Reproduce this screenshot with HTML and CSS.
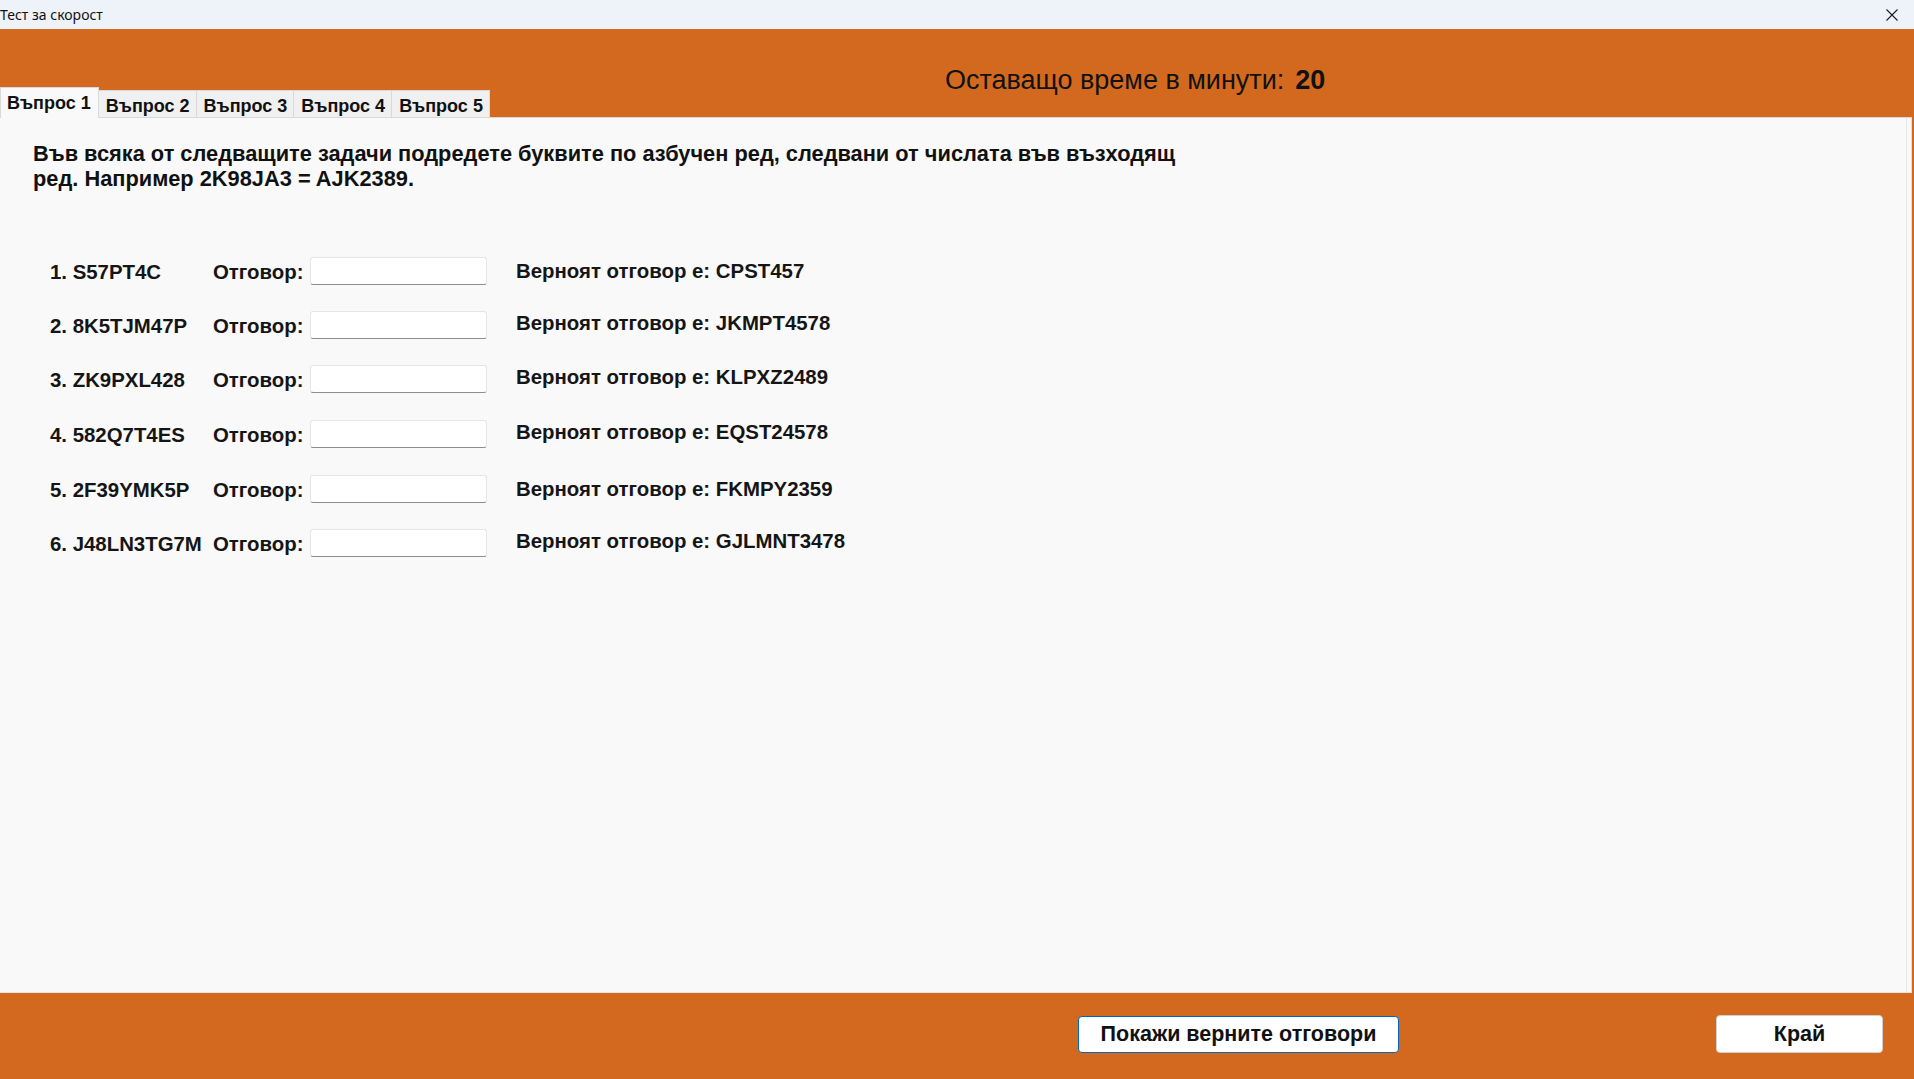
FILE: index.html
```html
<!DOCTYPE html>
<html lang="bg">
<head>
<meta charset="utf-8">
<title>Тест за скорост</title>
<link rel="stylesheet" href="styles.css">
</head>
<body>
<div class="window">
  <div class="titlebar">
    <span class="title">Тест за скорост</span>
    <svg class="close" viewBox="0 0 12 12" width="12" height="12"><path d="M0.5 0.5 L11.5 11.5 M11.5 0.5 L0.5 11.5" stroke="#1b1b1b" stroke-width="1.1" fill="none"/></svg>
  </div>
  <div class="header">
    <div class="tabs">
      <div class="tab active">Въпрос 1</div>
      <div class="tab">Въпрос 2</div>
      <div class="tab">Въпрос 3</div>
      <div class="tab">Въпрос 4</div>
      <div class="tab">Въпрос 5</div>
    </div>
    <div class="timer"><span class="timer-label">Оставащо време в минути:</span><span class="timer-value">20</span></div>
  </div>
  <div class="panel">
    <p class="instructions">Във всяка от следващите задачи подредете буквите по азбучен ред, следвани от числата във възходящ<br>ред. Например 2K98JA3 = AJK2389.</p>
    <div class="questions">
      <span class="q">1. S57PT4C</span><span class="lbl">Отговор:</span><span class="field"></span><span class="answer">Верноят отговор е: CPST457</span>
      <span class="q">2. 8K5TJM47P</span><span class="lbl">Отговор:</span><span class="field"></span><span class="answer raised">Верноят отговор е: JKMPT4578</span>
      <span class="q">3. ZK9PXL428</span><span class="lbl">Отговор:</span><span class="field"></span><span class="answer raised">Верноят отговор е: KLPXZ2489</span>
      <span class="q">4. 582Q7T4ES</span><span class="lbl">Отговор:</span><span class="field"></span><span class="answer raised">Верноят отговор е: EQST24578</span>
      <span class="q">5. 2F39YMK5P</span><span class="lbl">Отговор:</span><span class="field"></span><span class="answer">Верноят отговор е: FKMPY2359</span>
      <span class="q">6. J48LN3TG7M</span><span class="lbl">Отговор:</span><span class="field"></span><span class="answer raised">Верноят отговор е: GJLMNT3478</span>
    </div>
  </div>
  <div class="footer">
    <button class="btn btn-primary">Покажи верните отговори</button>
    <button class="btn btn-end">Край</button>
  </div>
</div>
</body>
</html>
```

FILE: styles.css
```css
* { box-sizing: border-box; }
html, body { margin: 0; padding: 0; }
body {
  width: 1914px;
  height: 1079px;
  overflow: hidden;
  background: #D2691E;
  font-family: "Liberation Sans", Arial, sans-serif;
  color: #000;
}
.window { display: flex; flex-direction: column; height: 1079px; }

.titlebar {
  height: 29px;
  background: #eef3fa;
  display: flex;
  align-items: center;
  justify-content: space-between;
  padding: 0 16px 0 0;
}
.title { font-family: "Noto Sans", sans-serif; font-size: 14px; color: #111; }
.close { display: block; }

.header {
  height: 88px;
  display: flex;
  align-items: flex-end;
  background: #D2691E;
}
.tabs { display: flex; align-items: flex-end; }
.tab {
  height: 27px;
  padding: 4px 6px 0 7px;
  line-height: 23px;
  font-size: 18px;
  font-weight: bold;
  color: #111;
  background: #f0f0f0;
  border: 1px solid #d9d9d9;
  border-bottom: none;
  margin-right: -1px;
  white-space: nowrap;
}
.tab.active {
  height: 31px;
  padding: 0 7px 0 6px;
  line-height: 30px;
  background: #f9f9f9;
  position: relative;
  z-index: 1;
  margin-bottom: -1px;
}
.timer {
  align-self: flex-start;
  margin-top: 35px;
  margin-left: 456px;
  font-size: 27px;
  line-height: 32px;
  color: #111;
  white-space: nowrap;
}
.timer-value { font-weight: bold; margin-left: 11px; }

.panel {
  flex: 1;
  margin-right: 2px;
  background: #f9f9f9;
  border-top: 1px solid #d9d9d9;
  border-right: 1px solid #dedede;
  border-bottom: 1px solid #e4e4e4;
  box-shadow: inset -4px 0 0 #f9f9f9, inset -5px 0 0 #e6e6e6;
}
.instructions {
  margin: 24px 0 0 33px;
  font-size: 21.8px;
  font-weight: bold;
  line-height: 24.5px;
  color: #111;
  white-space: nowrap;
}

.questions {
  margin: 53px 0 0 50px;
  display: grid;
  grid-template-columns: 163px 97px 177px auto;
  grid-template-rows: 54px 54px 54px 56px 54px 54px;
  align-items: center;
  font-size: 20.4px;
  font-weight: bold;
  color: #151515;
}
.q, .lbl, .answer { white-space: nowrap; }
.q, .lbl { padding-top: 2px; }
.field {
  height: 28px;
  background: #fff;
  border: 1px solid #e6e6e6;
  border-bottom: 1px solid #8d8d8d;
  border-radius: 3px;
}
.answer { margin-left: 29px; }
.answer.raised { margin-bottom: 4px; }

.footer {
  height: 86px;
  display: flex;
  align-items: flex-start;
  padding: 22px 0 0 1078px;
  gap: 317px;
}
.btn {
  font-family: "Liberation Sans", Arial, sans-serif;
  font-size: 21.5px;
  font-weight: bold;
  color: #111;
  background: #fff;
  border-radius: 4px;
  padding: 0;
  cursor: pointer;
}
.btn-primary { width: 321px; height: 37px; border: 1px solid #0067c0; margin-top: 1px; }
.btn-end { width: 167px; height: 38px; border: 1px solid #d0d0d0; }
```
